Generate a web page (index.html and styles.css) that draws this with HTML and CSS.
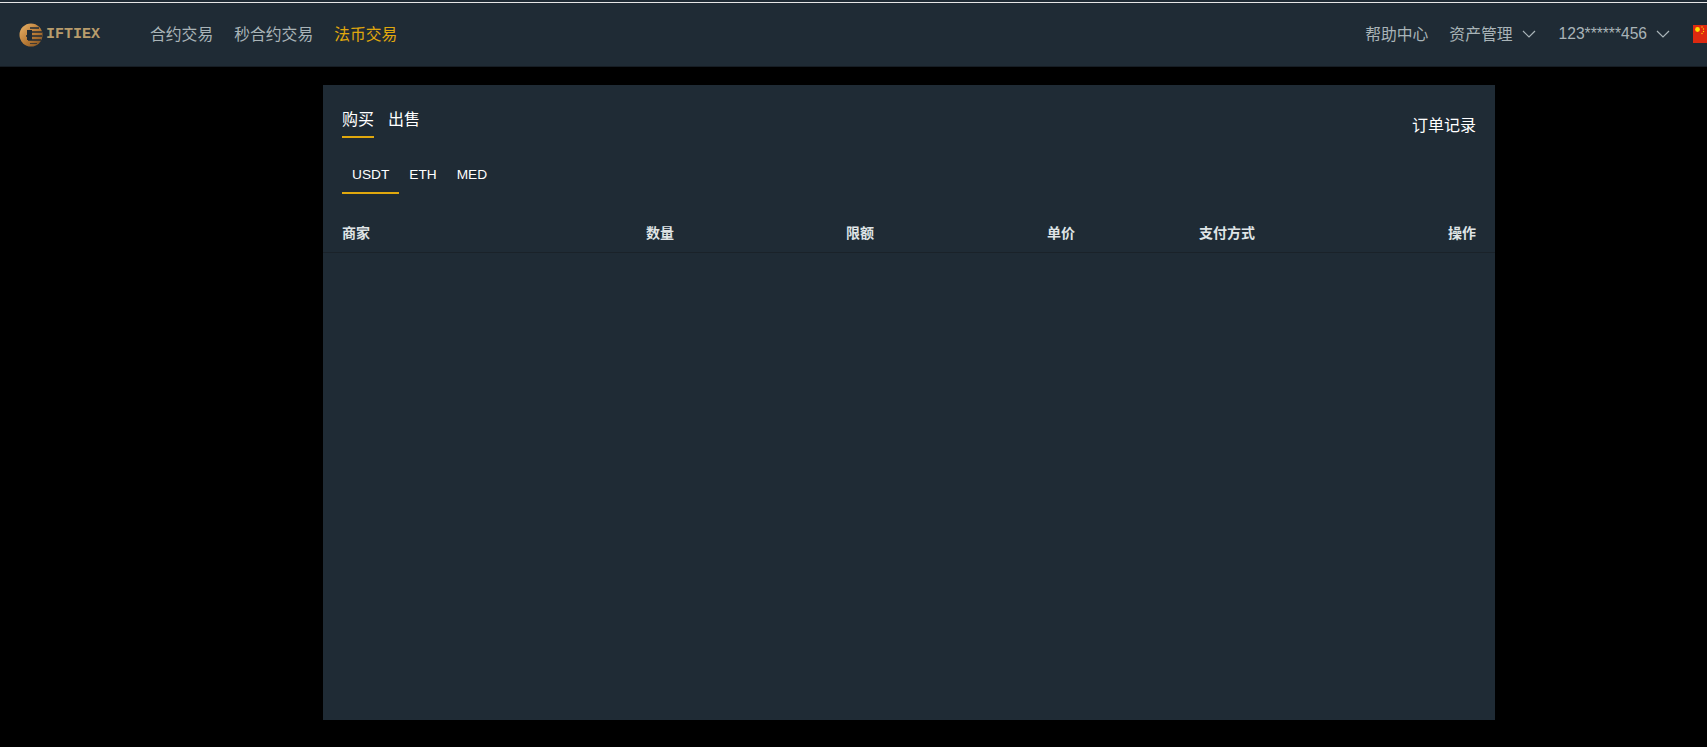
FILE: index.html
```html
<!DOCTYPE html>
<html lang="zh-CN">
<head>
    <meta charset="UTF-8">
    <meta name="viewport" content="width=device-width, initial-scale=1.0">
    <title>法币交易</title>
    <link rel="stylesheet" href="styles.css">
</head>
<body>
    <div class="topline"></div>
    <div class="navbar">
        <div class="nav-left">
            <a class="logo" href="#">
                <svg width="24" height="24" viewBox="0 0 24 24">
                    <defs>
                        <linearGradient id="gold" x1="0" y1="0" x2="1" y2="1">
                            <stop offset="0" stop-color="#e9b46a"/>
                            <stop offset="0.55" stop-color="#b87a35"/>
                            <stop offset="1" stop-color="#7a4f22"/>
                        </linearGradient>
                    </defs>
                    <circle cx="12" cy="12" r="11.5" fill="url(#gold)"/>
                    <path d="M11 4h9v2h-9zM9 8h14v2H9zM7 12h16v2H7zM9 16h13v2H9zM11 20h7v1h-7z" fill="#1f2b35" opacity="0.75"/>
                    <path d="M8 7h5v10H8z" fill="#1f2b35"/>
                </svg>
                <span class="logo-text">IFTIEX</span>
            </a>
            <a class="nav-link" href="#">合约交易</a>
            <a class="nav-link" href="#">秒合约交易</a>
            <a class="nav-link active" href="#">法币交易</a>
        </div>
        <div class="nav-right">
            <a class="nav-link" href="#">帮助中心</a>
            <a class="nav-link nav-asset" href="#">资产管理
                <svg class="chevron" width="14" height="8" viewBox="0 0 14 8"><path d="M1 1l6 6 6-6" fill="none" stroke="#a9b4b8" stroke-width="1.2"/></svg>
            </a>
            <a class="nav-link nav-account" href="#">123******456
                <svg class="chevron" width="14" height="8" viewBox="0 0 14 8"><path d="M1 1l6 6 6-6" fill="none" stroke="#a9b4b8" stroke-width="1.2"/></svg>
            </a>
            <svg class="flag" width="27" height="18" viewBox="0 0 27 18">
                <rect width="27" height="18" fill="#de2910"/>
                <circle cx="4.5" cy="4.5" r="2.4" fill="#ffde00"/>
                <circle cx="9" cy="2" r="0.7" fill="#ffde00"/>
                <circle cx="10.5" cy="4" r="0.7" fill="#ffde00"/>
                <circle cx="10.5" cy="6.5" r="0.7" fill="#ffde00"/>
                <circle cx="9" cy="8.5" r="0.7" fill="#ffde00"/>
            </svg>
        </div>
    </div>

    <div class="panel">
        <div class="panel-top">
            <div class="trade-tabs">
                <a class="trade-tab active" href="#">购买</a>
                <a class="trade-tab" href="#">出售</a>
            </div>
            <a class="order-link" href="#">订单记录</a>
        </div>
        <div class="coin-tabs">
            <a class="coin-tab active" href="#">USDT</a>
            <a class="coin-tab" href="#">ETH</a>
            <a class="coin-tab" href="#">MED</a>
        </div>
        <div class="table-head">
            <div>商家</div>
            <div>数量</div>
            <div>限额</div>
            <div>单价</div>
            <div>支付方式</div>
            <div class="align-right">操作</div>
        </div>
    </div>
</body>
</html>
```

FILE: styles.css
```css
html, body {
    margin: 0;
    height: 100%;
    overflow: hidden;
}
body {
    font-family: "Liberation Sans", "Noto Sans CJK SC", sans-serif;
    background-color: #000;
    color: #fff;
}
a {
    color: inherit;
    text-decoration: none;
}
.topline {
    height: 2px;
    background-color: #1f2b35;
    border-bottom: 1px solid #e6e6e6;
}
.navbar {
    width: 1720px;
    height: 64px;
    background-color: #1f2b35;
    border-bottom: 1px solid #161d24;
    display: flex;
    justify-content: space-between;
    align-items: center;
    box-sizing: border-box;
    padding: 0 0 2px 19px;
}
.nav-left,
.nav-right {
    display: flex;
    align-items: center;
}
.logo {
    display: flex;
    align-items: center;
    gap: 3px;
    width: 131px;
    margin-top: 2px;
}
.logo-text {
    font-family: "Liberation Mono", monospace;
    font-weight: bold;
    font-size: 15px;
    color: #b89c6c;
}
.nav-link {
    font-size: 15.8px;
    color: #a9b4b8;
    margin-right: 21px;
    display: flex;
    align-items: center;
}
.nav-link.active {
    color: #e0a80d;
}
.nav-asset {
    margin-right: 23px;
}
.nav-account {
    font-size: 15.6px;
}
.chevron {
    margin-left: 9px;
}
.flag {
    flex-shrink: 0;
    margin-left: 2px;
}
.panel {
    width: 1172px;
    height: 635px;
    margin: 18px 0 0 323px;
    background-color: #1f2b35;
}
.panel-top {
    display: flex;
    justify-content: space-between;
    padding: 0 19px;
}
.trade-tabs {
    display: flex;
    gap: 14px;
    padding-top: 24px;
}
.trade-tab {
    font-size: 16px;
    line-height: 22px;
    padding-bottom: 5px;
    border-bottom: 2px solid transparent;
}
.trade-tab.active {
    border-bottom-color: #e0a80d;
}
.order-link {
    font-size: 16px;
    line-height: 22px;
    margin-top: 30px;
}
.coin-tabs {
    display: flex;
    margin: 17px 0 0 19px;
}
.coin-tab {
    font-size: 13.7px;
    line-height: 20px;
    padding: 10px 10px 7px;
    border-bottom: 2px solid transparent;
}
.coin-tab.active {
    border-bottom-color: #e0a80d;
}
.table-head {
    display: grid;
    grid-template-columns: 304px 200px 201px 152px 1fr 100px;
    margin-top: 28px;
    padding: 0 19px;
    height: 30px;
    line-height: 22px;
    font-size: 14px;
    font-weight: bold;
    color: #dfe4e6;
    border-bottom: 1px solid #1a2229;
}
.align-right {
    text-align: right;
}
```
